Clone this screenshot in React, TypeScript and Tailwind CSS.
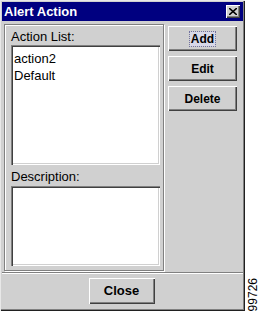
import React from "react";

const raised =
  "bg-[#d0d0d0] shadow-[inset_1px_1px_0_#ffffff,inset_-1px_-1px_0_#404040,inset_-2px_-2px_0_#808080]";
const sunken =
  "bg-white shadow-[inset_1px_1px_0_#808080,inset_2px_2px_0_#404040,inset_-1px_-1px_0_#ffffff,inset_-2px_-2px_0_#d0d0d0]";

function Btn({ label, focus }: { label: string; focus?: boolean }) {
  return (
    <button
      className={`${raised} w-[69px] h-[25px] flex items-center justify-center text-[12px] font-bold text-black`}
    >
      <span className={focus ? "px-[1px] outline outline-1 outline-dotted outline-[#7070a0] bg-[#d8d8e8] leading-[14px]" : ""}>
        {label}
      </span>
    </button>
  );
}

export default function App() {
  const actions = ["action2", "Default"];

  return (
    <div
      className="w-[260px] h-[313px] bg-white flex"
      style={{ fontFamily: '"Liberation Sans", Arial, sans-serif' }}
    >
      <div className="w-[245px] h-[311px] bg-[#d0d0d0] p-[2px] flex flex-col shadow-[inset_1px_1px_0_#e8e8e8,inset_-1px_-1px_0_#202020,inset_-2px_-2px_0_#808080]">
        {/* title bar */}
        <div className="h-[19px] bg-[#000080] flex items-center justify-between pl-[2px] pr-[3px]">
          <span className="text-white font-bold text-[13px] leading-none">Alert Action</span>
          <div className={`${raised} w-[14px] h-[13px] flex items-center justify-center`}>
            <svg width="8" height="7" viewBox="0 0 8 7">
              <path d="M0 0 L8 7 M8 0 L0 7" stroke="#000" strokeWidth="1.6" />
            </svg>
          </div>
        </div>

        <div className="flex flex-1 pt-[3px] pl-[2px] pr-[3px]">
          {/* left panel */}
          <div className="w-[160px] h-[247px] border border-[#808080] shadow-[inset_1px_1px_0_#ffffff,1px_1px_0_#ffffff] pt-[5px] pl-[6px] pr-[3px] flex flex-col">
            <div className="text-[13px] leading-[14px] text-black">Action List:</div>
            <div className={`${sunken} mt-[1px] h-[120px] pt-[5px] pl-[3px] flex flex-col`}>
              {actions.map((a) => (
                <div key={a} className="text-[13px] leading-[17px] text-black">
                  {a}
                </div>
              ))}
            </div>
            <div className="text-[13px] leading-[14px] text-black mt-[5px]">Description:</div>
            <div className={`${sunken} mt-[2px] h-[80px]`} />
          </div>

          {/* buttons */}
          <div className="flex flex-col gap-[5px] ml-[4px] pt-[2px]">
            <Btn label="Add" focus />
            <Btn label="Edit" />
            <Btn label="Delete" />
          </div>
        </div>

        {/* footer */}
        <div className="border-t border-[#808080] shadow-[inset_0_1px_0_#ffffff] h-[37px] flex justify-center pt-[5px] pr-[2px]">
          <button
            className={`${raised} w-[66px] h-[26px] text-[13px] font-bold text-black flex items-center justify-center`}
          >
            Close
          </button>
        </div>
      </div>

      <div className="flex-1 flex items-end justify-center pb-[2px]">
        <div className="text-[12px] leading-none text-black [writing-mode:vertical-rl] rotate-180">99726</div>
      </div>
    </div>
  );
}
